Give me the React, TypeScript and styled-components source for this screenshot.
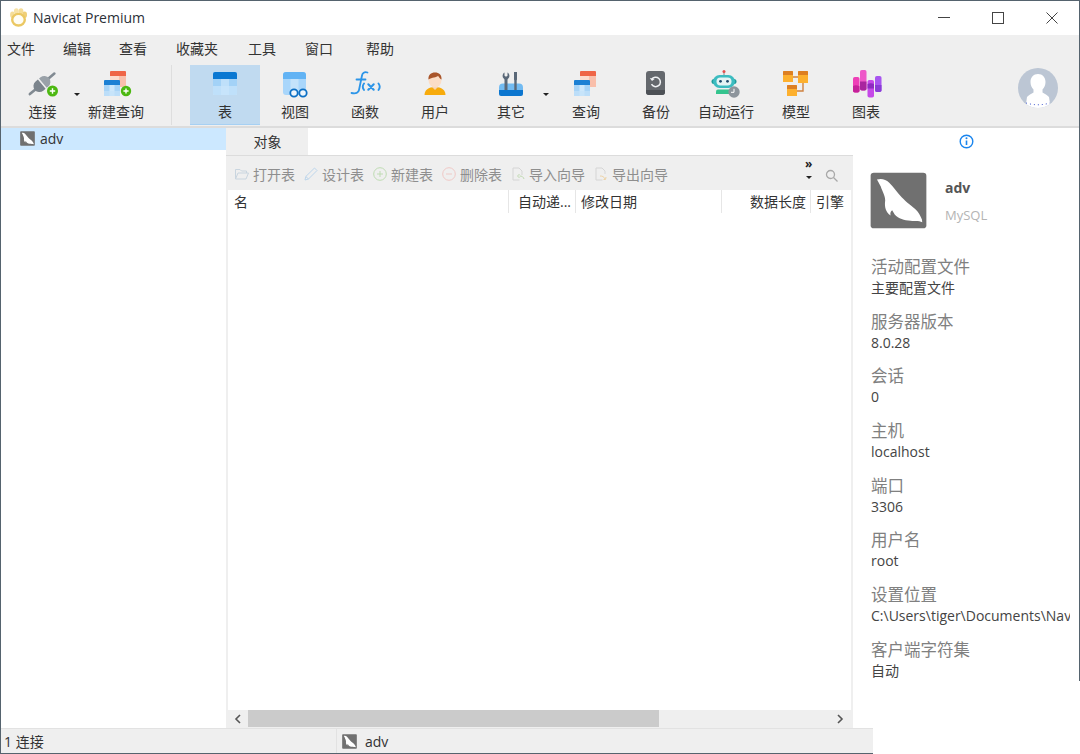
import React from 'react'
import styled, { createGlobalStyle } from 'styled-components'

const GlobalStyle = createGlobalStyle`
  html, body {
    margin: 0;
    padding: 0;
    background: #fff;
  }
  body {
    font-family: "Open Sans", "Noto Sans CJK SC", sans-serif;
    font-size: 14px;
    color: #333;
  }
`

const Window = styled.div`
  position: relative;
  width: 1080px;
  height: 754px;
  box-sizing: border-box;
  display: flex;
  flex-direction: column;
  border-top: 1px solid #55636e;
  border-left: 1px solid #55636e;
  overflow: hidden;

  &::after {
    content: '';
    position: absolute;
    top: 0;
    right: 0;
    width: 1px;
    height: 680px;
    background: #55636e;
  }
`

const TitleBar = styled.div`
  height: 34px;
  box-sizing: border-box;
  display: flex;
  align-items: center;
  padding: 0 0 1px 8px;
  background: #fff;
  flex: none;
`

const AppName = styled.span`
  margin-left: 5px;
  font-size: 14px;
  color: #2b3038;
`

const WindowControls = styled.div`
  margin-left: auto;
  margin-right: 1px;
  display: flex;
  align-items: center;
  height: 100%;
`

const WindowButton = styled.div`
  width: 54px;
  height: 100%;
  display: flex;
  align-items: center;
  justify-content: center;
`

const MenuBar = styled.div`
  height: 27px;
  box-sizing: border-box;
  flex: none;
  display: flex;
  align-items: center;
  background: #efefef;
  padding: 0 0 2px 6px;
`

const MenuItem = styled.span<{ $w: number }>`
  width: ${p => p.$w}px;
  font-size: 14px;
  color: #333;
`

const ToolBar = styled.div`
  height: 64px;
  flex: none;
  display: flex;
  background: #efefef;
  border-bottom: 2px solid #dcdcdc;
  position: relative;
`

const ToolGroup = styled.div`
  display: flex;
  align-items: stretch;
  padding: 3px 0 1px 6px;
`

const ToolButton = styled.div<{ $w: number; $active?: boolean; $gap?: number }>`
  width: ${p => p.$w}px;
  margin-right: ${p => p.$gap ?? 0}px;
  box-sizing: border-box;
  display: flex;
  flex-direction: column;
  align-items: center;
  padding-top: 4px;
  font-size: 14px;
  line-height: 20px;
  color: #333;
  background: ${p => (p.$active ? '#c0daf0' : 'transparent')};
  border-bottom: 1px solid ${p => (p.$active ? '#a6d0f3' : 'transparent')};

  svg {
    flex: none;
    margin-bottom: 3px;
  }
`

const Caret = styled.i<{ $w: number; $pull: number }>`
  width: ${p => p.$w}px;
  margin-left: -${p => p.$pull}px;
  margin-top: 28px;
  align-self: flex-start;
  position: relative;
  display: block;
  height: 3px;

  &::before {
    content: '';
    position: absolute;
    left: 0;
    top: 0;
    border: 3px solid transparent;
    border-top-color: #222;
    border-bottom: 0;
  }
`

const ToolDivider = styled.div`
  width: 1px;
  margin: 0 18px 0 0;
  background: #dedede;
`

const Avatar = styled.div`
  position: absolute;
  top: 6px;
  right: 22px;
  line-height: 0;
`

const Main = styled.div`
  flex: 1;
  min-height: 0;
  display: flex;
`

const TreePane = styled.div`
  width: 225px;
  flex: none;
  background: #fff;
`

const TreeRow = styled.div`
  height: 22px;
  box-sizing: border-box;
  display: flex;
  align-items: center;
  gap: 5px;
  padding: 0 0 1px 19px;
  background: #cce8ff;
  font-size: 14px;
  color: #333;
`

const CenterPane = styled.div`
  width: 627px;
  flex: none;
  display: flex;
  flex-direction: column;
  background: #efefef;
`

const TabStrip = styled.div`
  height: 28px;
  box-sizing: border-box;
  flex: none;
  display: flex;
  background: #fff;
  border-bottom: 1px solid #dcdcdc;
`

const Tab = styled.div`
  width: 82px;
  box-sizing: border-box;
  padding: 0 0 2px 1px;
  display: flex;
  align-items: center;
  justify-content: center;
  background: #efefef;
  font-size: 14px;
  color: #333;
`

const ActionBar = styled.div`
  height: 34px;
  box-sizing: border-box;
  flex: none;
  display: flex;
  align-items: center;
  padding: 2px 0 0 8px;
  position: relative;
`

const Action = styled.div<{ $w: number }>`
  width: ${p => p.$w}px;
  display: flex;
  align-items: center;
  gap: 3px;
  font-size: 14px;
  color: #8e8e8e;
  white-space: nowrap;
`

const OverflowMark = styled.div`
  position: absolute;
  top: 2px;
  left: 579px;
  width: 8px;
  font-size: 12px;
  line-height: 12px;
  font-weight: 700;
  color: #222;
`

const OverflowCaret = styled.svg`
  display: block;
  margin: 6px 0 0 1px;
`

const SearchMark = styled.div`
  position: absolute;
  top: 13px;
  left: 599px;
  line-height: 0;
`

const TableArea = styled.div`
  flex: 1;
  min-height: 0;
  margin: 0 2px;
  background: #fff;
`

const HeaderRow = styled.div`
  height: 23px;
  display: flex;
  background: #fff;
`

const HeaderCell = styled.div<{ $w: number; $right?: boolean }>`
  width: ${p => p.$w}px;
  box-sizing: border-box;
  flex: none;
  display: flex;
  align-items: center;
  justify-content: ${p => (p.$right ? 'flex-end' : 'flex-start')};
  padding: 0 4px 1px 5px;
  border-right: 1px solid #e6e6e6;
  font-size: 14px;
  color: #333;
  white-space: nowrap;
  overflow: hidden;

  &:first-child {
    padding-left: 6px;
  }

  &:last-child {
    border-right: 0;
  }
`

const ScrollBar = styled.div`
  height: 18px;
  flex: none;
  display: flex;
  align-items: flex-start;
  background: #efefef;
  padding: 0 3px 0 2px;
`

const ScrollArrow = styled.div`
  width: 20px;
  height: 17px;
  display: flex;
  align-items: center;
  justify-content: center;
  flex: none;
`

const ScrollThumb = styled.div`
  width: 411px;
  height: 17px;
  background: #cbcbcb;
`

const ScrollTrack = styled.div`
  flex: 1;
`

const InfoPane = styled.div`
  flex: 1;
  min-width: 0;
  background: #fff;
  padding-left: 18px;
  overflow: hidden;
`

const InfoMark = styled.div`
  height: 27px;
  display: flex;
  align-items: center;
  justify-content: center;
  margin-left: -18px;
`

const DbHeader = styled.div`
  display: flex;
  margin: 17px 0 25px -1px;
`

const DbText = styled.div`
  margin-left: 18px;
  padding-top: 6px;
`

const DbName = styled.div`
  font-size: 14px;
  line-height: 20px;
  font-weight: 700;
  color: #555;
`

const DbType = styled.div`
  font-size: 13px;
  line-height: 18px;
  margin-top: 8px;
  color: #b4b4b4;
`

const InfoGroup = styled.div`
  height: 54.7px;
  width: 199px;
  white-space: nowrap;
  overflow: hidden;
`

const InfoLabel = styled.div`
  font-size: 16.5px;
  line-height: 23px;
  padding-top: 1px;
  color: #808080;
`

const InfoValue = styled.div`
  font-size: 14px;
  line-height: 20px;
  color: #444;
`

const StatusBar = styled.div`
  width: 872px;
  height: 26px;
  box-sizing: border-box;
  flex: none;
  display: flex;
  align-items: center;
  background: #efefef;
  border-top: 1px solid #e2e2e2;
  border-bottom: 1px solid #55636e;
  font-size: 14px;
  color: #333;
`

const StatusLeft = styled.div`
  width: 336px;
  padding-left: 3px;
  box-sizing: border-box;
  border-right: 1px solid #e2e2e2;
  height: 100%;
  display: flex;
  align-items: center;
`

const StatusRight = styled.div`
  display: flex;
  align-items: center;
  gap: 8px;
  padding-left: 5px;
  font-size: 14px;
`

const DbIcon = ({ size }: { size: number }) => (
  <svg width={size} height={size} viewBox="0 0 18 18">
    <rect x="0.2" y="0.2" width="17.6" height="17.6" rx="1" fill="#707070" />
    <path
      d="M2.2 2.4C3.500 1.900 5 2.300 6 3.300 7.500 4.800 8.500 6.400 10 8 11.500 9.600 13.500 11 14.500 11.900 15.300 12.700 16 13.900 16.400 15L16.500 15.900C15.500 15.200 14.200 15.600 12.800 15.400 10.800 15.200 9 14.800 7.800 13.400L7 12.100C6.500 12.500 6.300 13 6.500 13.700 5 12.800 4.500 11 4.800 9 4.800 7.400 3.800 6 3.400 4.600z"
      fill="#fff"
    />
  </svg>
)

// red table behind a blue one, used by both query buttons
const StackedTables = ({ x }: { x: number }) => (
  <g transform={`translate(${x} 0)`}>
    <path d="M6 3a1 1 0 0 1 1-1h14a1 1 0 0 1 1 1v4H6z" fill="#ef6547" />
    <rect x="6" y="7" width="16" height="11" fill="#fcdccf" />
    <rect x="15" y="7" width="7" height="11" fill="#f9bfab" />
    <path d="M0 12a1 1 0 0 1 1-1h14a1 1 0 0 1 1 1v4H0z" fill="#1c80d4" />
    <rect x="0" y="16" width="16" height="11" fill="#a8d4f7" />
    <rect x="5.500" y="16" width="5" height="11" fill="#cde7fb" />
    <rect x="0" y="22" width="16" height="5" fill="#c4e2fa" opacity=".7" />
  </g>
)

const ConnectIcon = () => (
  <svg width="32" height="30" viewBox="0 0 32 30">
    <g transform="rotate(-40 15.500 14.500)">
      <path d="M-1 14.500h8M23 14.500h8" stroke="#818a92" strokeWidth="2.600" strokeLinecap="round" />
      <path d="M14.500 8.500h-3a6 6 0 0 0 0 12h3z" fill="#7b848c" />
      <path d="M16 8.500h2a6 6 0 0 1 0 12h-2z" fill="#99a1a8" />
    </g>
    <circle cx="25.500" cy="22" r="5.500" fill="#4cb811" />
    <path d="M22.800 22h5.400M25.500 19.300v5.400" stroke="#fff" strokeWidth="1.400" />
  </svg>
)

const NewQueryIcon = () => (
  <svg width="32" height="30" viewBox="0 0 32 30">
    <StackedTables x={4} />
    <circle cx="26" cy="22" r="5.200" fill="#4cb811" />
    <path d="M23.400 22h5.200M26 19.400v5.200" stroke="#fff" strokeWidth="1.400" />
  </svg>
)

const QueryIcon = () => (
  <svg width="26" height="30" viewBox="0 0 26 30">
    <StackedTables x={1} />
  </svg>
)

const TableIcon = () => (
  <svg width="26" height="30" viewBox="0 0 26 30">
    <g transform="translate(1 3)">
      <rect width="24" height="23" rx="2" fill="#a3d2f7" />
      <rect x="8" y="6" width="8" height="17" fill="#bfe0fa" />
      <rect y="14" width="24" height="9" fill="#cbe6fb" opacity=".7" />
      <path d="M0 2a2 2 0 0 1 2-2h20a2 2 0 0 1 2 2v5H0z" fill="#0a78d2" />
    </g>
  </svg>
)

const ViewIcon = () => (
  <svg width="28" height="30" viewBox="0 0 28 30">
    <rect x="2" y="3" width="23" height="23" rx="3" fill="#a9d6fb" />
    <path d="M2 6a3 3 0 0 1 3-3h17a3 3 0 0 1 3 3v4H2z" fill="#62b3f4" />
    <rect x="9.500" y="10" width="8" height="16" fill="#c4e3fb" />
    <circle cx="13" cy="24" r="3.700" fill="#eef6fd" stroke="#0d70c4" strokeWidth="1.800" />
    <circle cx="22" cy="24" r="3.700" fill="#eef6fd" stroke="#0d70c4" strokeWidth="1.800" />
  </svg>
)

const FunctionIcon = () => (
  <svg width="32" height="30" viewBox="0 0 32 30" fill="none" stroke="#2c95e8" strokeLinecap="round">
    <path d="M18.500 3.500c-3.200-.9-5 .4-5.500 3L10 21c-.5 2.800-3 3.900-7.500 3" strokeWidth="1.800" />
    <path d="M7.500 10.500h9" strokeWidth="1.800" />
    <path d="M15 14.500c-1.500 2-1.500 4.500 0 6.500M29.500 14.500c1.500 2 1.500 4.500 0 6.500" strokeWidth="1.900" />
    <path d="M19.300 15.300l5.400 5.400M24.700 15.300l-5.400 5.400" strokeWidth="2.100" />
  </svg>
)

const UserIcon = () => (
  <svg width="26" height="30" viewBox="0 0 26 30">
    <path d="M2.500 26c0-5 3.800-8 10.500-8s10.500 3 10.500 8z" fill="#f7ab0c" />
    <path d="M10 18l3 3 3-3-.4-3h-5.200z" fill="#f7d3b4" />
    <ellipse cx="13" cy="11" rx="6.500" ry="7.500" fill="#fbddc6" />
    <path d="M6.500 10.500C6 6 9 3.500 13 3.500s7 2.500 6.500 7c-1.200-.4-2.700-2.700-3.500-3.800-1.500 2-6 1.400-9.500 3.800z" fill="#a9552a" />
  </svg>
)

const OtherIcon = () => (
  <svg width="28" height="30" viewBox="0 0 28 30">
    <path d="M6 14.500h16a4 4 0 0 1 4 4V21H2v-2.500a4 4 0 0 1 4-4z" fill="#72bbf2" />
    <path d="M2 21h24v4a2 2 0 0 1-2 2H4a2 2 0 0 1-2-2z" fill="#0c76cf" />
    <path d="M7.500 3.500v3.200l1.500 1 1.500-1V3.500c2 1 2.600 4.300 1 5.700-.6.500-1 .8-1 1.500V21h-3V10.700c0-.7-.4-1-1-1.500-1.600-1.400-1-4.700 1-5.700z" fill="#5a6878" />
    <path d="M17 3h3v7.500l-.3 1V21h-2.400v-9.500l-.3-1z" fill="#5a6878" />
  </svg>
)

const BackupIcon = () => (
  <svg width="26" height="30" viewBox="0 0 26 30" fill="none">
    <rect x="3" y="2" width="19" height="24" rx="3" fill="#64686d" />
    <path d="M3 21h19v2a3 3 0 0 1-3 3H6a3 3 0 0 1-3-3z" fill="#4d5156" />
    <path d="M8.700 10.500a4.700 4.700 0 1 1-.2 4.600" stroke="#f0f2f4" strokeWidth="1.500" />
    <path d="M6.800 9l2.200 3 2.600-2z" fill="#f0f2f4" />
  </svg>
)

const RobotIcon = () => (
  <svg width="32" height="30" viewBox="0 0 32 30">
    <path d="M14 3v4" stroke="#7a8a88" strokeWidth="1" />
    <circle cx="14" cy="2.500" r="1.500" fill="#e2504e" />
    <rect x="1.500" y="10" width="25" height="5" rx="2.500" fill="#1d9c9a" />
    <rect x="3" y="6" width="22" height="13" rx="6.500" fill="#3cbcc0" />
    <rect x="6.500" y="8.500" width="15" height="8" rx="4" fill="#e4f4f4" />
    <circle cx="10.500" cy="12.300" r="1.400" fill="#1e4a6a" />
    <circle cx="17.500" cy="12.300" r="1.400" fill="#1e4a6a" />
    <path d="M8 20.500h12a2 2 0 0 1 2 2V25H6v-2.500a2 2 0 0 1 2-2z" fill="#34c48e" />
    <circle cx="24" cy="23" r="5.700" fill="#8d959c" />
    <path d="M24 19.800v3.500h-3" fill="none" stroke="#fff" strokeWidth="1" />
  </svg>
)

const ModelIcon = () => (
  <svg width="30" height="30" viewBox="0 0 30 30" fill="none">
    <path d="M12 8h5M22 14v8h-6" stroke="#cf8240" strokeWidth="1.400" />
    <path d="M3 2h8a1 1 0 0 1 1 1v10H2V3a1 1 0 0 1 1-1z" fill="#fdb02e" />
    <path d="M3 2h8a1 1 0 0 1 1 1v3H2V3a1 1 0 0 1 1-1z" fill="#dd7f22" />
    <path d="M18 2h8a1 1 0 0 1 1 1v11H17V3a1 1 0 0 1 1-1z" fill="#fdb02e" />
    <path d="M18 2h8a1 1 0 0 1 1 1v3H17V3a1 1 0 0 1 1-1z" fill="#dd7f22" />
    <path d="M7 16h8a1 1 0 0 1 1 1v10H6V17a1 1 0 0 1 1-1z" fill="#fdb02e" />
    <path d="M7 16h8a1 1 0 0 1 1 1v3H6v-3a1 1 0 0 1 1-1z" fill="#dd7f22" />
  </svg>
)

const ChartIcon = () => (
  <svg width="32" height="30" viewBox="0 0 32 30">
    <rect x="3" y="8" width="6.500" height="15.500" rx="1.800" fill="#ee3fb7" />
    <rect x="10" y="1" width="6.500" height="20.500" rx="1.800" fill="#ee58c8" />
    <rect x="17.500" y="11" width="6.500" height="17.500" rx="1.800" fill="#c548e8" />
    <rect x="25" y="7" width="6.500" height="16" rx="1.800" fill="#a855f0" />
    <path d="M3 17c2-1 4.500-.8 6.500.3v4.400a1.800 1.800 0 0 1-1.800 1.800H4.800A1.800 1.800 0 0 1 3 21.700z" fill="#c5229a" />
    <path d="M10 12.500h6.500v7.200a1.800 1.800 0 0 1-1.800 1.800h-2.900a1.800 1.800 0 0 1-1.800-1.800z" fill="#a9259f" />
    <path d="M17.500 15c2-1 4.500-1 6.500 0v4.500h-6.500z" fill="#8d2bc0" />
    <path d="M25 16h6.500v5.200a1.800 1.800 0 0 1-1.800 1.800h-2.900a1.800 1.800 0 0 1-1.800-1.800z" fill="#8a3cd6" />
  </svg>
)

const AppLogo = () => (
  <svg width="19" height="19" viewBox="0 0 19 19" fill="none">
    <ellipse cx="3.400" cy="6.800" rx="2.300" ry="3.200" fill="#f5dd98" />
    <ellipse cx="7.300" cy="3.300" rx="2.400" ry="3" fill="#f7e2a6" />
    <ellipse cx="12" cy="3.300" rx="2.400" ry="3" fill="#f5dd98" />
    <ellipse cx="15.700" cy="6.800" rx="2.300" ry="3.200" fill="#f0cf78" />
    <ellipse cx="9.500" cy="11.700" rx="6.300" ry="5.800" fill="#fffdf4" stroke="#ebc863" strokeWidth="2.400" />
  </svg>
)

const ActionIcon = ({ kind }: { kind: string }) => {
  const common = { width: 16, height: 16, viewBox: '0 0 16 16', fill: 'none' }
  if (kind === 'open') {
    return (
      <svg {...common} stroke="#c9d5df">
        <path d="M1.500 13V3.500h4.500l1.500 1.500h5V7M1.500 13l2.500-6h10.500l-2.500 6z" />
      </svg>
    )
  }
  if (kind === 'design') {
    return (
      <svg {...common} stroke="#bdd6ec">
        <path d="M2 14l.8-3.500L11.500 2l2.500 2.500L5.500 13zM2.800 10.500l2.700 2.500" />
      </svg>
    )
  }
  if (kind === 'add') {
    return (
      <svg {...common} stroke="#bfdcb3">
        <circle cx="8" cy="8" r="6.300" />
        <path d="M5 8h6M8 5v6" />
      </svg>
    )
  }
  if (kind === 'remove') {
    return (
      <svg {...common} stroke="#efc9c6">
        <circle cx="8" cy="8" r="6.300" />
        <path d="M5 8h6" />
      </svg>
    )
  }
  if (kind === 'import') {
    return (
      <svg {...common}>
        <path d="M9.500 14H3V2h6l3 3v4" stroke="#d5d5d5" />
        <path d="M14 13c-.5-2-2-3-4.500-3M9.500 8L7.500 10l2 2" stroke="#bfd9b0" />
      </svg>
    )
  }
  return (
    <svg {...common}>
      <path d="M9.500 14H3V2h6l3 3v3" stroke="#d5d5d5" />
      <path d="M7 10c2 0 4 .5 5 3M10.500 13.500l2 0 .5-2.500" stroke="#edd3a6" />
    </svg>
  )
}

const menuItems: [string, number][] = [
  ['文件', 56], ['编辑', 56], ['查看', 57], ['收藏夹', 72], ['工具', 57], ['窗口', 61], ['帮助', 40],
]

const actions: [string, string, number][] = [
  ['open', '打开表', 69], ['design', '设计表', 69], ['add', '新建表', 69],
  ['remove', '删除表', 69], ['import', '导入向导', 83], ['export', '导出向导', 80],
]

const infoItems: [string, string][] = [
  ['活动配置文件', '主要配置文件'],
  ['服务器版本', '8.0.28'],
  ['会话', '0'],
  ['主机', 'localhost'],
  ['端口', '3306'],
  ['用户名', 'root'],
  ['设置位置', 'C:\\Users\\tiger\\Documents\\Nav'],
  ['客户端字符集', '自动'],
]

const App: React.FC = () => (
  <Window>
    <GlobalStyle />
    <TitleBar>
      <AppLogo />
      <AppName>Navicat Premium</AppName>
      <WindowControls>
        <WindowButton>
          <svg width="12" height="12" viewBox="0 0 12 12"><path d="M0 5.500h12" stroke="#444" /></svg>
        </WindowButton>
        <WindowButton>
          <svg width="12" height="12" viewBox="0 0 12 12"><rect x=".5" y=".5" width="11" height="11" fill="none" stroke="#444" /></svg>
        </WindowButton>
        <WindowButton>
          <svg width="12" height="12" viewBox="0 0 12 12"><path d="M.5.500l11 11M11.500.500l-11 11" stroke="#444" /></svg>
        </WindowButton>
      </WindowControls>
    </TitleBar>
    <MenuBar>
      {menuItems.map(([label, w]) => <MenuItem key={label} $w={w}>{label}</MenuItem>)}
    </MenuBar>
    <ToolBar>
      <ToolGroup>
        <ToolButton $w={71}><ConnectIcon />连接</ToolButton>
        <Caret $w={6} $pull={4} />
        <ToolButton $w={72} $gap={19}><NewQueryIcon />新建查询</ToolButton>
        <ToolDivider />
        <ToolButton $w={70} $active><TableIcon />表</ToolButton>
        <ToolButton $w={70}><ViewIcon />视图</ToolButton>
        <ToolButton $w={70}><FunctionIcon />函数</ToolButton>
        <ToolButton $w={70} $gap={6}><UserIcon />用户</ToolButton>
        <ToolButton $w={70}><OtherIcon />其它</ToolButton>
        <Caret $w={8} $pull={3} />
        <ToolButton $w={70}><QueryIcon />查询</ToolButton>
        <ToolButton $w={70}><BackupIcon />备份</ToolButton>
        <ToolButton $w={70}><RobotIcon />自动运行</ToolButton>
        <ToolButton $w={70}><ModelIcon />模型</ToolButton>
        <ToolButton $w={70}><ChartIcon />图表</ToolButton>
      </ToolGroup>
      <Avatar>
        <svg width="40" height="40" viewBox="0 0 40 40">
          <circle cx="20" cy="20" r="20" fill="#bcc6d4" />
          <path d="M20 6c-4.500 0-7.500 3.500-7.500 8 0 3 1.200 5.500 3 7.500v3c-2 1.500-5 2.500-6.500 4.500L8 36a20 20 0 0 0 24 0l-1-7c-1.500-2-4.500-3-6.500-4.500v-3c1.800-2 3-4.500 3-7.500 0-4.500-3-8-7.500-8z" fill="#fff" />
          <path d="M8 35q12 3.500 24 0" fill="none" stroke="#2440c8" strokeWidth="1" strokeDasharray="1 3" />
        </svg>
      </Avatar>
    </ToolBar>
    <Main>
      <TreePane>
        <TreeRow><DbIcon size={15} />adv</TreeRow>
      </TreePane>
      <CenterPane>
        <TabStrip><Tab>对象</Tab></TabStrip>
        <ActionBar>
          {actions.map(([kind, label, w]) => (
            <Action key={kind} $w={w}><ActionIcon kind={kind} />{label}</Action>
          ))}
          <OverflowMark>
            »
            <OverflowCaret width="6" height="3" viewBox="0 0 6 3"><path d="M0 0h6L3 3z" fill="#222" /></OverflowCaret>
          </OverflowMark>
          <SearchMark>
            <svg width="13" height="13" viewBox="0 0 13 13" fill="none" stroke="#a8a8a8" strokeWidth="1.300"><circle cx="5.500" cy="5.500" r="4" /><path d="M8.500 8.500l4 4" /></svg>
          </SearchMark>
        </ActionBar>
        <TableArea>
          <HeaderRow>
            <HeaderCell $w={281}>名</HeaderCell>
            <HeaderCell $w={67} $right>自动递...</HeaderCell>
            <HeaderCell $w={146}>修改日期</HeaderCell>
            <HeaderCell $w={89} $right>数据长度</HeaderCell>
            <HeaderCell $w={40}>引擎</HeaderCell>
          </HeaderRow>
        </TableArea>
        <ScrollBar>
          <ScrollArrow>
            <svg width="8" height="10" viewBox="0 0 8 10" fill="none" stroke="#555" strokeWidth="1.600"><path d="M6 1L2 5l4 4" /></svg>
          </ScrollArrow>
          <ScrollThumb />
          <ScrollTrack />
          <ScrollArrow>
            <svg width="8" height="10" viewBox="0 0 8 10" fill="none" stroke="#555" strokeWidth="1.600"><path d="M2 1l4 4-4 4" /></svg>
          </ScrollArrow>
        </ScrollBar>
      </CenterPane>
      <InfoPane>
        <InfoMark>
          <svg width="15" height="15" viewBox="0 0 15 15" fill="none">
            <circle cx="7.500" cy="7.500" r="6.300" stroke="#1a85ee" strokeWidth="1.400" />
            <path d="M7.500 6.500v4.500" stroke="#1a85ee" strokeWidth="1.600" />
            <circle cx="7.500" cy="4.300" r="1" fill="#1a85ee" />
          </svg>
        </InfoMark>
        <DbHeader>
          <DbIcon size={57} />
          <DbText>
            <DbName>adv</DbName>
            <DbType>MySQL</DbType>
          </DbText>
        </DbHeader>
        {infoItems.map(([label, value]) => (
          <InfoGroup key={label}>
            <InfoLabel>{label}</InfoLabel>
            <InfoValue>{value}</InfoValue>
          </InfoGroup>
        ))}
      </InfoPane>
    </Main>
    <StatusBar>
      <StatusLeft>1 连接</StatusLeft>
      <StatusRight><DbIcon size={15} />adv</StatusRight>
    </StatusBar>
  </Window>
)

export default App
